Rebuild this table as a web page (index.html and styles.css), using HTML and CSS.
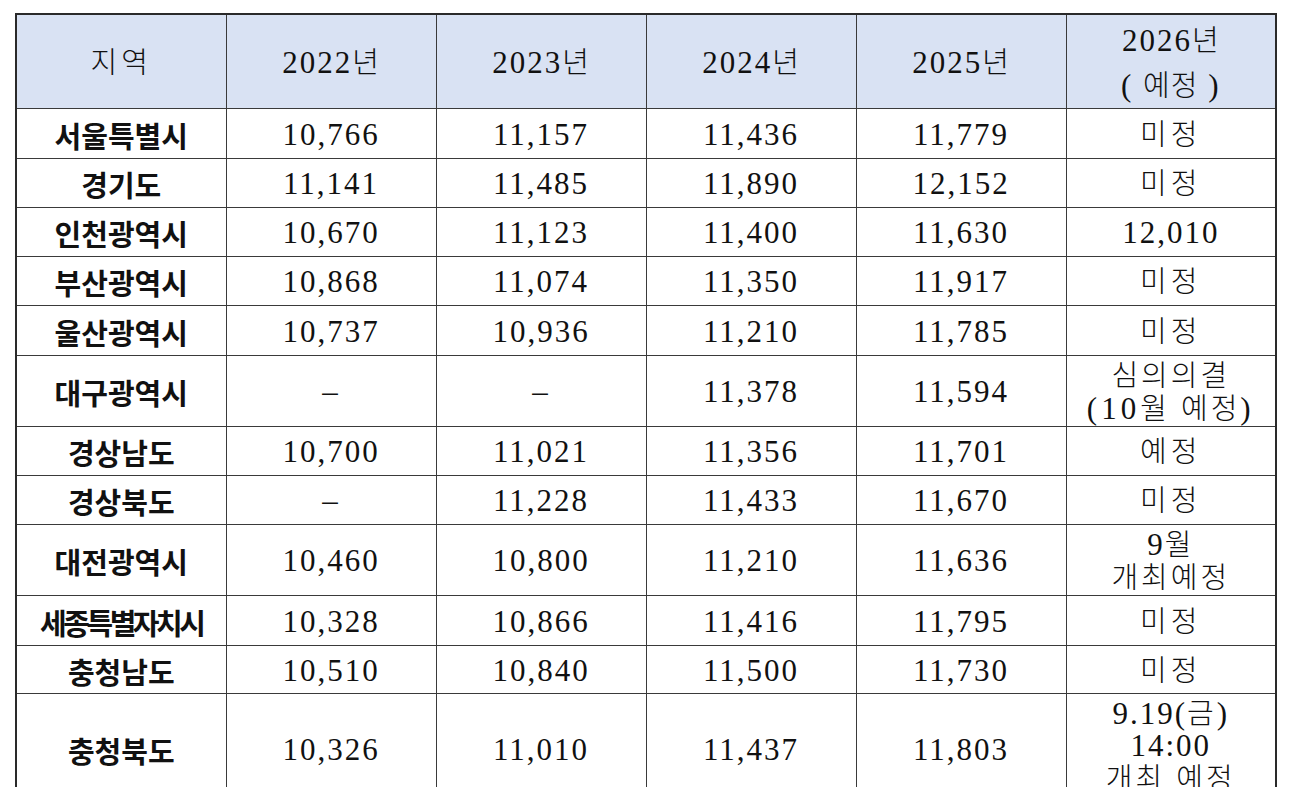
FILE: index.html
```html
<!DOCTYPE html>
<html lang="ko">
<head>
<meta charset="utf-8">
<title>지역별 생활임금</title>
<link rel="stylesheet" href="styles.css">
</head>
<body>
<table class="wage">
  <colgroup>
    <col class="c"><col class="c"><col class="c"><col class="c"><col class="c"><col class="c">
  </colgroup>
  <thead>
    <tr class="head">
      <th><span class="ko wide">지역</span></th>
      <th>2022<span class="ko">년</span></th>
      <th>2023<span class="ko">년</span></th>
      <th>2024<span class="ko">년</span></th>
      <th>2025<span class="ko">년</span></th>
      <th class="two">2026<span class="ko">년</span><br>( <span class="ko">예정</span> )</th>
    </tr>
  </thead>
  <tbody>
    <tr class="r50"><td class="region">서울특별시</td><td>10,766</td><td>11,157</td><td>11,436</td><td>11,779</td><td><span class="ko wide">미정</span></td></tr>
    <tr class="r49"><td class="region">경기도</td><td>11,141</td><td>11,485</td><td>11,890</td><td>12,152</td><td><span class="ko wide">미정</span></td></tr>
    <tr class="r49"><td class="region">인천광역시</td><td>10,670</td><td>11,123</td><td>11,400</td><td>11,630</td><td>12,010</td></tr>
    <tr class="r49"><td class="region">부산광역시</td><td>10,868</td><td>11,074</td><td>11,350</td><td>11,917</td><td><span class="ko wide">미정</span></td></tr>
    <tr class="r50"><td class="region">울산광역시</td><td>10,737</td><td>10,936</td><td>11,210</td><td>11,785</td><td><span class="ko wide">미정</span></td></tr>
    <tr class="r71"><td class="region">대구광역시</td><td>–</td><td>–</td><td>11,378</td><td>11,594</td><td class="multi"><span class="ko">심의의결</span><br><span class="paren">(10<span class="ko">월 예정</span>)</span></td></tr>
    <tr class="r49"><td class="region">경상남도</td><td>10,700</td><td>11,021</td><td>11,356</td><td>11,701</td><td><span class="ko wide">예정</span></td></tr>
    <tr class="r49"><td class="region">경상북도</td><td>–</td><td>11,228</td><td>11,433</td><td>11,670</td><td><span class="ko wide">미정</span></td></tr>
    <tr class="r71"><td class="region">대전광역시</td><td>10,460</td><td>10,800</td><td>11,210</td><td>11,636</td><td class="multi">9<span class="ko">월</span><br><span class="ko">개최예정</span></td></tr>
    <tr class="r50"><td class="region squeeze">세종특별자치시</td><td>10,328</td><td>10,866</td><td>11,416</td><td>11,795</td><td><span class="ko wide">미정</span></td></tr>
    <tr class="r48"><td class="region">충청남도</td><td>10,510</td><td>10,840</td><td>11,500</td><td>11,730</td><td><span class="ko wide">미정</span></td></tr>
    <tr class="last"><td class="region">충청북도</td><td>10,326</td><td>11,010</td><td>11,437</td><td>11,803</td><td class="multi top">9.19(<span class="ko">금</span>)<br>14:00<br><span class="ko">개최 예정</span></td></tr>
  </tbody>
</table>
</body>
</html>
```

FILE: styles.css
```css
html, body {
  margin: 0;
  padding: 0;
  overflow: hidden;
  background: #ffffff;
}

body {
  padding: 13px 0 0 15px;
  font-family: "Liberation Serif", "Noto Sans CJK KR", serif;
  color: #111111;
}

.wage {
  border-collapse: collapse;
  table-layout: fixed;
  width: 1260px;
  border: 2px solid #2a2a2a;
}

.wage col.c {
  width: 210px;
}

.wage th,
.wage td {
  border: 1px solid #3a3a3a;
  padding: 2px 0 0;
  text-align: center;
  vertical-align: middle;
  font-size: 31px;
  font-weight: 400;
  letter-spacing: 2px;
  line-height: 34px;
  white-space: nowrap;
  overflow: hidden;
}

.wage thead th {
  background: #d9e2f3;
  height: 91px;
}

.wage th.two {
  line-height: 45px;
}

.ko {
  font-family: "Noto Sans CJK KR", sans-serif;
  font-size: 29px;
  font-weight: 300;
  letter-spacing: 1px;
  line-height: 1;
}

.ko.wide {
  letter-spacing: 4px;
}

.wage td.multi .ko {
  letter-spacing: 3px;
}

.paren {
  letter-spacing: 4px;
}

.wage td.region {
  font-family: "Noto Sans CJK KR", sans-serif;
  font-size: 29px;
  font-weight: 700;
  letter-spacing: 0;
}

.wage td.region.squeeze {
  letter-spacing: -3.5px;
}

.wage td.multi {
  line-height: 33px;
}

.wage td.multi.top {
  vertical-align: top;
  line-height: 32px;
  padding-top: 3px;
}

.r48 { height: 48px; }
.r49 { height: 49px; }
.r50 { height: 50px; }
.r71 { height: 71px; }
.last { height: 112px; }
```
